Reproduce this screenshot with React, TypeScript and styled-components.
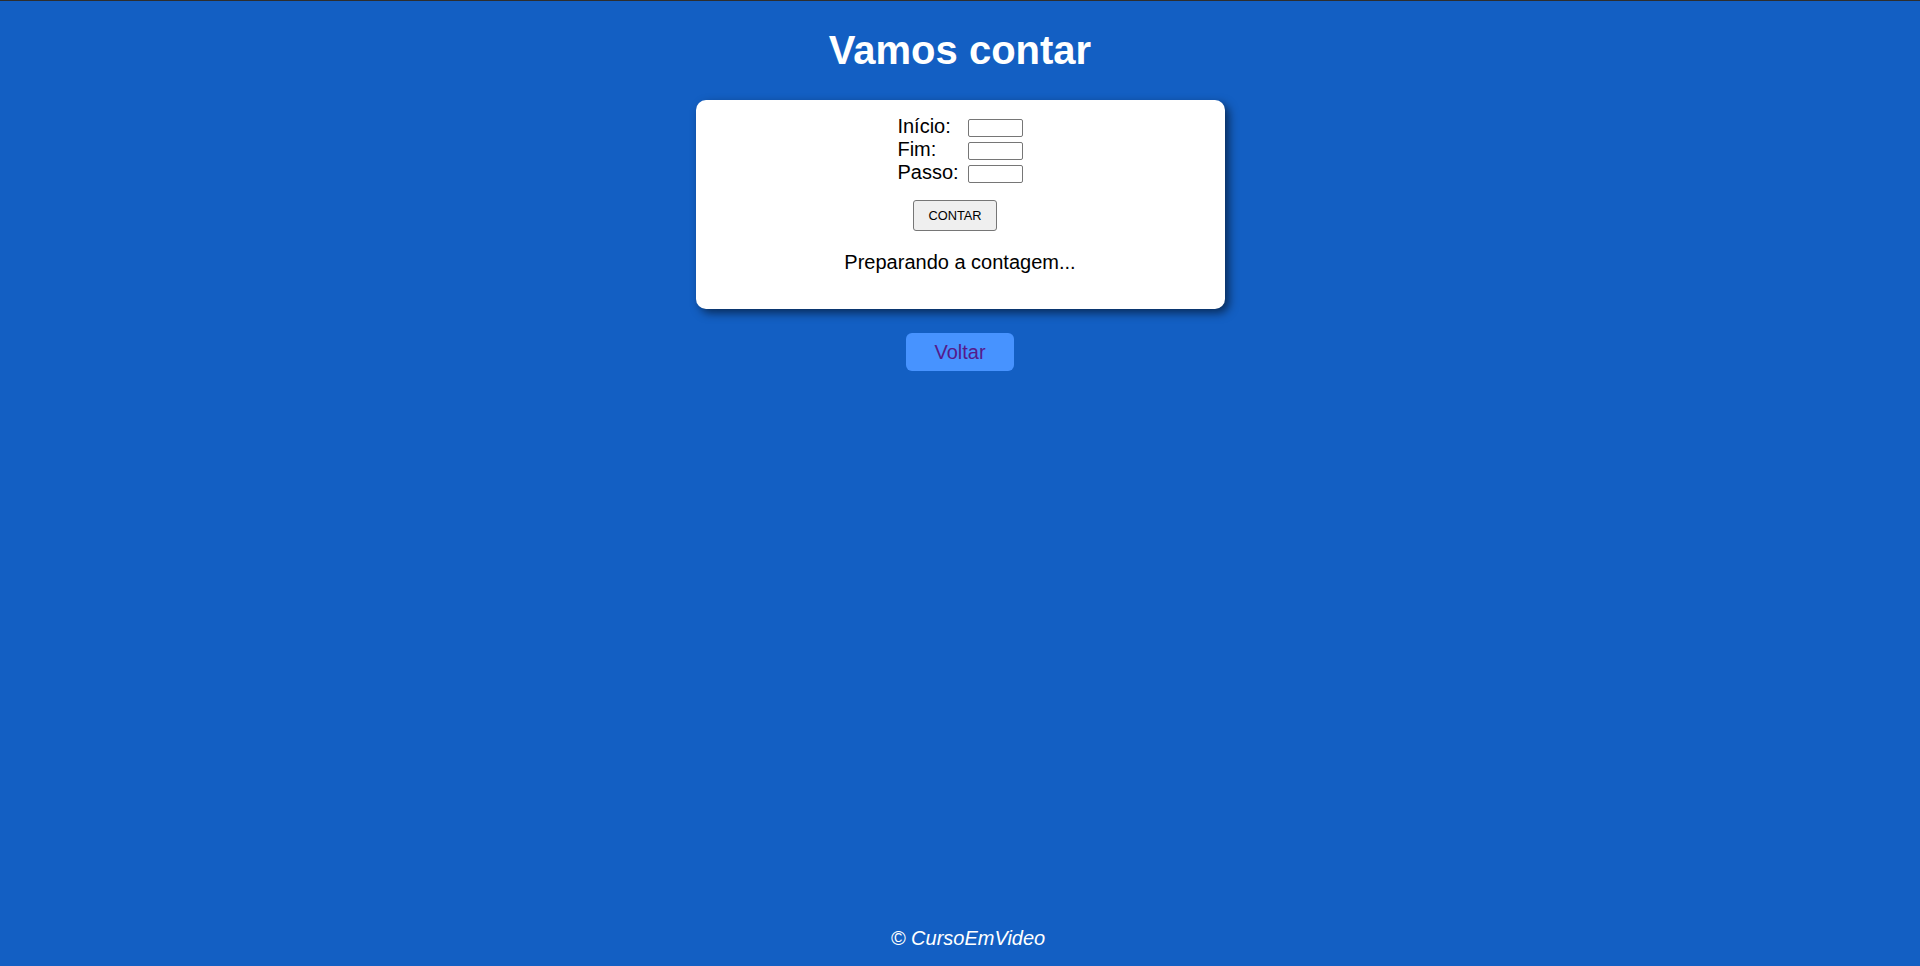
import React from "react";
import styled, { createGlobalStyle } from "styled-components";

const GlobalStyle = createGlobalStyle`
  html, body {
    margin: 0;
    padding: 0;
  }
  body {
    background: #135fc3;
    font-family: "Liberation Sans", Arial, sans-serif;
  }
  * { box-sizing: border-box; }
`;

const Page = styled.div`
  min-height: 100vh;
  display: flex;
  flex-direction: column;
  align-items: center;
  border-top: 1px solid #2e2e2e;
`;

const Title = styled.h1`
  margin: 26px 0 27px;
  font-size: 40px;
  line-height: 46px;
  font-weight: bold;
  color: #ffffff;
  text-align: center;
`;

const Card = styled.section`
  width: 529px;
  background: #ffffff;
  border-radius: 10px;
  box-shadow: 4px 4px 10px rgba(0, 0, 0, 0.55);
  padding: 13.3px 0 35.2px;
  display: flex;
  flex-direction: column;
  align-items: center;
  color: #000000;
`;

const Form = styled.div`
  display: grid;
  grid-template-columns: auto 55px;
  grid-auto-rows: 23px;
  column-gap: 9px;
  justify-content: center;
`;

const Label = styled.label`
  font-size: 20px;
  line-height: 23px;
  padding-top: 2px;
  text-align: left;
`;

const NumInput = styled.input`
  align-self: end;
  width: 55px;
  height: 18px;
  margin: 0 0 -1px;
  padding: 0 2px;
  border: 1px solid #767676;
  border-radius: 2px;
  background: #ffffff;
  font-size: 13px;
`;

const ButtonRow = styled.div`
  display: flex;
  justify-content: center;
  margin-top: 17.7px;
`;

const CountButton = styled.button`
  width: 84px;
  height: 31px;
  margin: 0 10px 0 0;
  padding: 0;
  font-family: "Liberation Sans", Arial, sans-serif;
  font-size: 12.8px;
  color: #000000;
  background: #efefef;
  border: 1px solid #767676;
  border-radius: 3px;
`;

const Result = styled.p`
  margin: 19.6px 0 0;
  font-size: 20px;
  line-height: 23px;
  text-align: center;
`;

const BackLink = styled.a`
  display: inline-block;
  margin-top: 24.5px;
  padding: 7.25px 28px;
  font-size: 20px;
  line-height: 23px;
  color: #551a8b;
  background: #4793ff;
  border-radius: 6px;
  text-decoration: none;
`;

const Footer = styled.footer`
  margin-top: auto;
  padding: 0 0 16.4px 16px;
  font-size: 20px;
  line-height: 23px;
  font-style: italic;
  color: #ffffff;
  text-align: center;
`;

export default function App() {
  return (
    <>
      <GlobalStyle />
      <Page>
        <Title>Vamos contar</Title>
        <Card>
          <Form>
            <Label htmlFor="inicio">Início:</Label>
            <NumInput id="inicio" type="text" />
            <Label htmlFor="fim">Fim:</Label>
            <NumInput id="fim" type="text" />
            <Label htmlFor="passo">Passo:</Label>
            <NumInput id="passo" type="text" />
          </Form>
          <ButtonRow>
            <CountButton type="button">CONTAR</CountButton>
          </ButtonRow>
          <Result>Preparando a contagem...</Result>
        </Card>
        <BackLink href="#">Voltar</BackLink>
        <Footer>© CursoEmVideo</Footer>
      </Page>
    </>
  );
}
